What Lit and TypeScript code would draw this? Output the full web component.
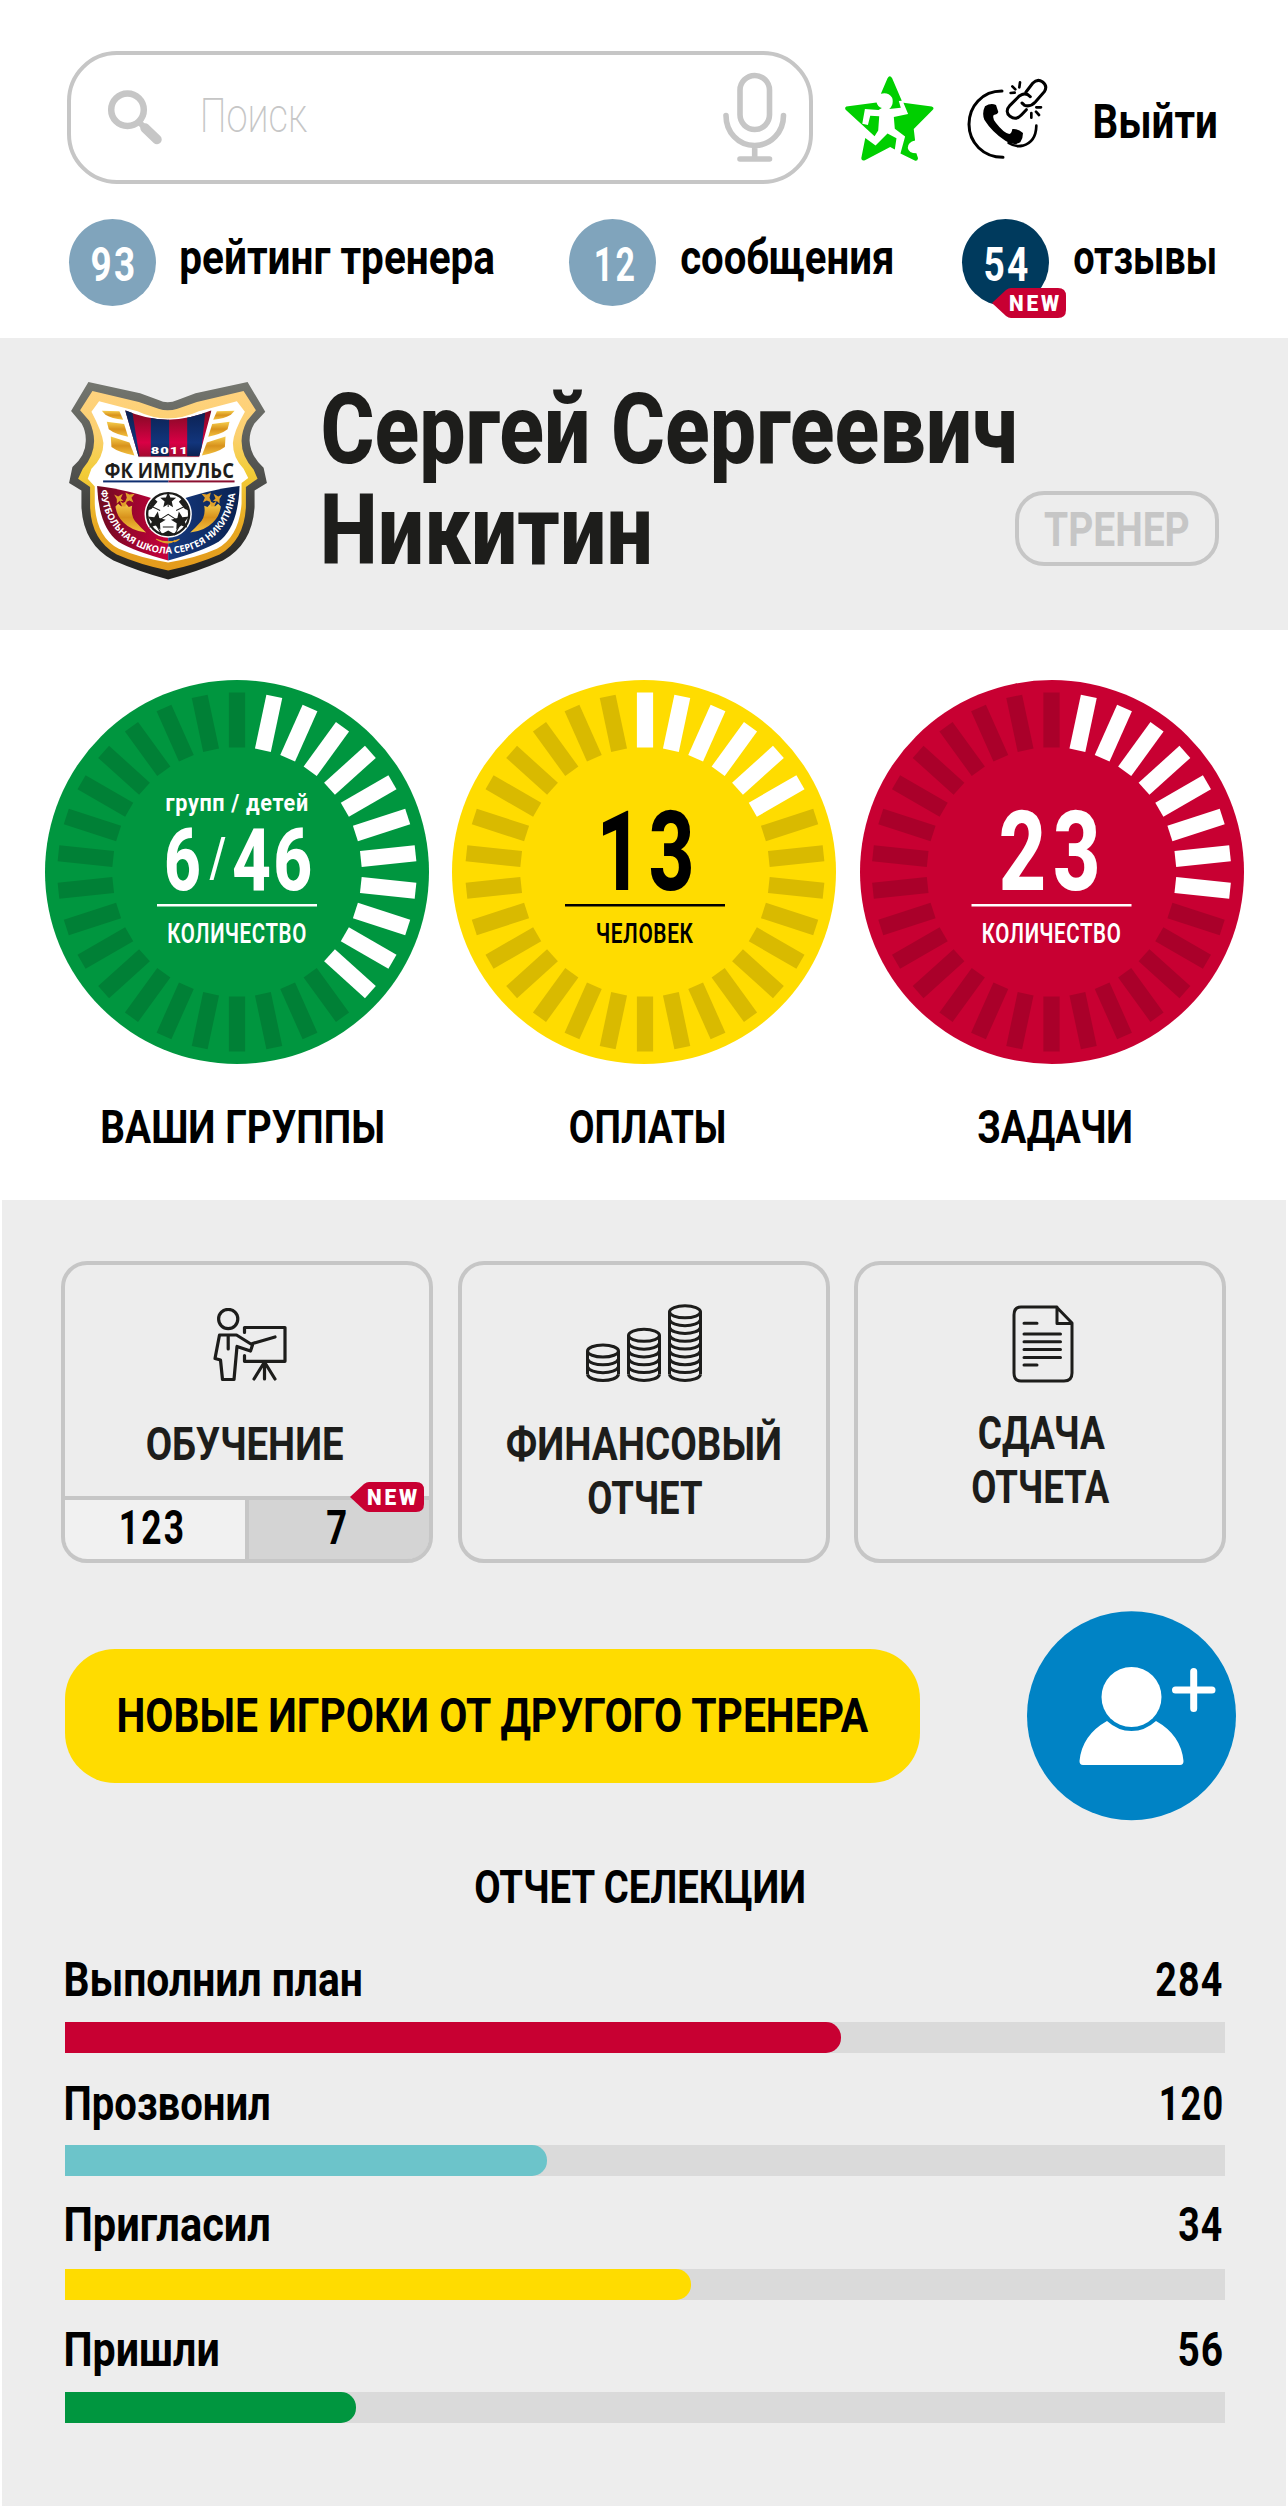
import { LitElement, html, svg, css } from "lit";
import { customElement, property } from "lit/decorators.js";

const INK = "#1d1d1b";
const FAMILY = 'Roboto, "Liberation Sans", sans-serif';
const CAP = 0.711;

const ctx = document.createElement("canvas").getContext("2d")!;

interface FitOptions {
  weight?: number;
  fill?: string;
  spacing?: number;
  family?: string;
}

/** SVG text whose inked glyphs span exactly `w` from `x`, with capitals `cap` tall. */
function fitText(text: string, x: number, baseline: number, w: number, cap: number, o: FitOptions = {}) {
  const size = cap / CAP;
  const weight = o.weight ?? 700;
  const family = o.family ?? FAMILY;
  const spacing = o.spacing ?? 0;
  ctx.font = `${weight} ${size}px ${family}`;
  (ctx as any).letterSpacing = `${spacing}px`;
  const m = ctx.measureText(text);
  const left = -m.actualBoundingBoxLeft;
  const scale = w / (m.actualBoundingBoxRight - left);
  return svg`<text
    transform="translate(${x - left * scale} ${baseline}) scale(${scale} 1)"
    font-family=${family} font-size=${size} font-weight=${weight}
    letter-spacing=${spacing} fill=${o.fill ?? "#000"}>${text}</text>`;
}

/** A line of text as a block exactly as wide as its ink and as tall as its capitals. */
function line(text: string, w: number, cap: number, o: FitOptions & { dx?: number; dy?: number } = {}) {
  return html`<svg class="line" width=${w} height=${cap}>
    ${fitText(text, o.dx ?? 0, cap + (o.dy ?? 0), w, cap, o)}
  </svg>`;
}

const lineStyles = css`
  .line { display: block; flex: none; overflow: visible; }
  svg { display: block; flex: none; }
`;

@customElement("new-tag")
class NewTag extends LitElement {
  static styles = css`
    :host { display: block; }
    svg { display: block; }
  `;
  render() {
    return html`<svg width="74" height="30" viewBox="0 0 74 30">
      <path d="M0 15 L14 2 Q16.500 0 19 0 H66 Q74 0 74 8 V22 Q74 30 66 30 H19 Q16.500 30 14 28 Z" fill="#c80032" />
      ${fitText("NEW", 18, 23, 49.5, 16, { weight: 900, fill: "#fff", spacing: 3 })}
    </svg>`;
  }
}

@customElement("club-crest")
class ClubCrest extends LitElement {
  static styles = css`
    :host { display: block; }
    svg { display: block; }
    .ring { font: 700 28px "Open Sans", "Noto Sans", sans-serif; }
  `;
  render() {
    const star = (cx: number, cy: number, r: number, turn = 0) => {
      const pts = Array.from({ length: 10 }, (_, i) => {
        const a = ((i * 36 - 90 + turn) * Math.PI) / 180;
        const k = i % 2 ? r * 0.45 : r;
        return `${(cx + k * Math.cos(a)).toFixed(1)},${(cy + k * Math.sin(a)).toFixed(1)}`;
      }).join(" ");
      return svg`<polygon points=${pts} fill=${INK} />`;
    };
    const wing = svg`
      <path d="M155 151 L208 153 L219 178 Q185 175 166 163 Z" fill="url(#gold2)" />
      <path d="M170 184 L222 191 L234 229 Q195 222 176 207 Z" fill="url(#gold2)" />
      <path d="M182 228 L238 246 L253 285 Q205 276 184 260 Z" fill="url(#gold2)" />
      <path d="M196 438 L204 430 L214 438 L224 426 L236 440 L246 436 Q240 470 262 490 Q274 504 288 516 Q246 512 220 486 Q200 468 196 438 Z" fill="url(#gold2)" />
      <path d="M192 402 l12 6 14 -8 -6 14 8 8 -12 0 -8 8 0 -14 Z M226 396 l12 6 16 -2 -10 12 6 14 -12 -6 -14 6 6 -14 Z M208 420 l10 8 12 -6 -4 16 -10 0 Z" fill="#e0a02a" />`;
    return html`<svg width="198" height="197.500" viewBox="57 65 593 592">
      <defs>
        <linearGradient id="steel" x1="0" y1="0" x2="0" y2="1">
          <stop offset="0" stop-color="#757770" /><stop offset=".5" stop-color="#4d4e4b" /><stop offset="1" stop-color="#20201e" />
        </linearGradient>
        <linearGradient id="gold" x1="0" y1="0" x2="0" y2="1">
          <stop offset="0" stop-color="#ffd27e" /><stop offset=".25" stop-color="#fbd06f" /><stop offset=".45" stop-color="#f2cd38" /><stop offset=".75" stop-color="#e8a922" /><stop offset="1" stop-color="#e39a1c" />
        </linearGradient>
        <linearGradient id="gold2" x1="0" y1="0" x2="0" y2="1">
          <stop offset="0" stop-color="#f6cf4e" /><stop offset=".5" stop-color="#d8921c" /><stop offset="1" stop-color="#f3c13f" />
        </linearGradient>
        <linearGradient id="crimson" x1="0" y1="150" x2="0" y2="288" gradientUnits="userSpaceOnUse">
          <stop offset="0" stop-color="#7d0a22" /><stop offset=".7" stop-color="#d90045" /><stop offset="1" stop-color="#a30a30" />
        </linearGradient>
        <linearGradient id="navy" x1="0" y1="150" x2="0" y2="288" gradientUnits="userSpaceOnUse">
          <stop offset="0" stop-color="#0b2151" /><stop offset=".7" stop-color="#12357c" /><stop offset="1" stop-color="#0b2151" />
        </linearGradient>
        <linearGradient id="halfred" x1="0" y1="0" x2="1" y2="0">
          <stop offset="0" stop-color="#6d0a20" /><stop offset="1" stop-color="#c8003c" />
        </linearGradient>
        <linearGradient id="halfblue" x1="0" y1="0" x2="1" y2="0">
          <stop offset="0" stop-color="#15397f" /><stop offset="1" stop-color="#0a2251" />
        </linearGradient>
        <clipPath id="banner"><path d="M225 150 Q352 206 484 150 L447 288 H265 Z" /></clipPath>
        <path id="ringpath" d="M153 388 A201 191 0 0 0 555 388" />
      </defs>
      <path fill="url(#steel)" d="M115 65 L270 99 L325 119 Q352 132 382 119 L436 99 L592 65 L645 154 L612 190 Q598 214 598 240 Q600 286 640 322 L650 368 L613 390 V440 Q606 552 518 600 Q440 634 354 657 Q268 634 190 600 Q100 552 94 440 V390 L57 368 L67 320 Q108 286 107 240 Q108 214 95 190 L63 152 Z" />
      <path fill="url(#gold)" d="M127 92 L266 125 L325 145 Q352 154 382 145 L440 125 L580 92 L617 150 L590 182 Q574 214 574 242 Q574 288 610 327 L622 355 L587 380 V440 Q582 540 508 582 Q440 612 354 630 Q268 612 200 582 Q124 540 120 440 V380 L84 355 L98 325 Q132 286 132 242 Q132 214 118 182 L90 150 Z" />
      <path fill="#fff" d="M147 123 L262 153 Q352 196 446 153 L560 123 L584 154 Q550 214 548 248 Q548 292 580 325 L594 353 L574 368 V430 Q566 530 500 565 Q440 592 354 606 Q268 592 206 565 Q138 530 134 430 V378 L113 355 L124 325 Q160 292 160 248 Q156 214 124 154 Z" />
      <g clip-path="url(#banner)">
        <rect x="220" y="145" width="270" height="145" fill="url(#crimson)" />
        <path d="M220 145 H245 L268 290 H220 Z" fill="url(#navy)" />
        <rect x="302" y="145" width="55" height="145" fill="url(#navy)" />
        <path d="M411 145 H466 L452 290 H411 Z" fill="url(#navy)" />
      </g>
      <path d="M141 377 Q230 386 354 430 V600 Q250 572 205 544 Q146 500 141 377 Z" fill="url(#halfred)" />
      <path d="M568 377 Q480 386 354 430 V600 Q458 572 505 544 Q564 500 568 377 Z" fill="url(#halfblue)" />
      ${wing}
      <g transform="translate(708 0) scale(-1 1)">${wing}</g>
      <path d="M318 536 Q354 552 388 536 Q370 548 372 541 Q354 556 318 536 Z" fill="#e0a02a" stroke="#e0a02a" stroke-width="3" />
      <rect x="265" y="288" width="182" height="2" fill="#8b1030" />
      ${fitText("8011", 303, 280, 103, 20, { weight: 900, fill: "#fff", spacing: 2 })}
      ${fitText("ФК ИМПУЛЬС", 165, 352, 385, 45, { weight: 700, fill: INK, family: '"Open Sans", "Noto Sans", sans-serif' })}
      <rect x="159" y="360" width="196" height="6" fill="#0f2f70" />
      <rect x="355" y="360" width="198" height="6" fill="#8b1030" />
      <circle cx="354" cy="461" r="71" fill="#fff" />
      <circle cx="354" cy="461" r="63" fill="#fff" stroke=${INK} stroke-width="7" />
      <path d="M354 440 V404 M330 450 L300 436 M378 450 L408 436 M326 480 L354 462 L382 480 M322 500 L336 524 M386 500 L372 524 M338 500 H370" stroke=${INK} stroke-width="3" fill="none" />
      ${star(354, 420, 25)}${star(318, 482, 29, 10)}${star(391, 482, 29, -10)}
      <path d="M292 450 L310 412 L322 424 L304 446 Z M416 450 L398 412 L386 424 L404 446 Z M336 520 L354 510 L372 520 L354 526 Z" fill=${INK} />
      <text class="ring" fill="#fff"><textPath href="#ringpath" textLength="604" lengthAdjust="spacingAndGlyphs">ФУТБОЛЬНАЯ ШКОЛА СЕРГЕЯ НИКИТИНА</textPath></text>
    </svg>`;
  }
}

interface GaugeData {
  title: string;
  titleWidth: number;
  dx: number;
  color: string;
  dim: string;
  ink: string;
  from: number;
  to: number;
  kind: "pair" | "single";
  value: string;
  valueX: number;
  valueWidth: number;
  unit: string;
  unitX: number;
  unitWidth: number;
  center: number;
}

@customElement("ring-gauge")
class RingGauge extends LitElement {
  static styles = [lineStyles, css`
    :host { display: flex; flex-direction: column; align-items: center; gap: 46px; width: 384px; }
  `];
  @property({ attribute: false }) data!: GaugeData;
  render() {
    const d = this.data;
    const c = d.center;
    const ticks = Array.from({ length: 30 }, (_, i) => svg`<rect x=${c - 8.1} y="12.500" width="16.200" height="55"
      transform="rotate(${i * 12} ${c} 192)" fill=${i >= d.from && i <= d.to ? "#fff" : d.dim} />`);
    return html`
      <svg width="384" height="384" viewBox="0 0 384 384">
        <circle cx="192" cy="192" r="192" fill=${d.color} />
        ${ticks}
        ${d.kind === "pair"
          ? svg`
            ${fitText("групп / детей", 121.3, 131, 141, 17.6, { fill: d.ink, spacing: 0.8 })}
            ${fitText("6", 121.3, 210, 33, 62, { fill: d.ink, weight: 800 })}
            ${fitText("/", 164.5, 197, 16, 40, { fill: d.ink, weight: 500 })}
            ${fitText("46", 188.5, 210, 77, 62, { fill: d.ink, weight: 800, spacing: 3 })}`
          : fitText(d.value, d.valueX, 210, d.valueWidth, 78.5, { fill: d.ink, weight: 800, spacing: 9 })}
        <rect x=${c - 80} y="224" width="160" height="2.500" fill=${d.ink} />
        ${fitText(d.unit, d.unitX, 263, d.unitWidth, 19, { fill: d.ink, weight: 600, spacing: 0.8 })}
      </svg>
      ${line(d.title, d.titleWidth, 33, { dx: d.dx })}`;
  }
}

@customElement("progress-row")
class ProgressRow extends LitElement {
  static styles = [lineStyles, css`
    :host { display: block; height: 123.500px; }
    .head { display: flex; justify-content: space-between; padding: 0 3px 0 1px; }
    .track { height: 31px; margin-top: 26px; background: #dadada; }
    .fill { height: 100%; border-radius: 0 15px 15px 0; }
    .red { background: #c80032; }
    .teal { background: #6cc4ca; }
    .yellow { background: #ffdc00; }
    .green { background: #00963f; }
  `];
  @property() name = "";
  @property() value = "";
  @property() tone = "red";
  @property({ type: Number }) nameWidth = 0;
  @property({ type: Number }) valueWidth = 0;
  @property({ type: Number }) share = 0;
  @property({ type: Number }) dy = 0;
  render() {
    return html`
      <div class="head">
        ${line(this.name, this.nameWidth, 34, { dy: this.dy })}
        ${line(this.value, this.valueWidth, 34, { dy: this.dy, spacing: 1.5 })}
      </div>
      <div class="track"><div class="fill ${this.tone}" style="width:${this.share}%"></div></div>`;
  }
}

const gauges: GaugeData[] = [
  { title: "ВАШИ ГРУППЫ", titleWidth: 281, dx: 6, color: "#00963f", dim: "#008036", ink: "#fff", from: 1, to: 11, kind: "pair", value: "", valueX: 0, valueWidth: 0, unit: "КОЛИЧЕСТВО", unitX: 123, unitWidth: 138, center: 192 },
  { title: "ОПЛАТЫ", titleWidth: 155, dx: 2.5, color: "#ffdc00", dim: "#d9ba00", ink: "#000", from: 0, to: 5, kind: "single", value: "13", valueX: 151, valueWidth: 88, unit: "ЧЕЛОВЕК", unitX: 144.5, unitWidth: 97, center: 193 },
  { title: "ЗАДАЧИ", titleWidth: 153, dx: 3, color: "#c80032", dim: "#aa002a", ink: "#fff", from: 1, to: 8, kind: "single", value: "23", valueX: 141, valueWidth: 96, unit: "КОЛИЧЕСТВО", unitX: 122.5, unitWidth: 138, center: 191.5 },
];

const rows = [
  { name: "Выполнил план", nameWidth: 295, value: "284", valueWidth: 66, share: 66.9, tone: "red", dy: -0.5 },
  { name: "Прозвонил", nameWidth: 203, value: "120", valueWidth: 61, share: 41.55, tone: "teal", dy: 0.5 },
  { name: "Пригласил", nameWidth: 203, value: "34", valueWidth: 43, share: 53.95, tone: "yellow", dy: -2 },
  { name: "Пришли", nameWidth: 152, value: "56", valueWidth: 43, share: 25.1, tone: "green", dy: -0.5 },
];

@customElement("app-root")
class AppRoot extends LitElement {
  static styles = [lineStyles, css`
    :host { display: block; width: 1288px; height: 2506px; background: #fff; overflow: hidden; }
    .top { display: flex; height: 184px; padding: 51px 0 0 67px; box-sizing: border-box; }
    .search { display: flex; align-items: flex-start; box-sizing: border-box; width: 746px; height: 133px;
      border: 4px solid #c6c6c6; border-radius: 50px; padding: 0 22px 0 36px; }
    .lens { margin: 35px 40px 0 0; }
    .query { margin-top: 43px; }
    .mic { margin: 17px 0 0 auto; }
    .star { margin: 25px 0 0 32px; }
    .call { margin: 26px 0 0 33px; }
    .exit { margin: 53px 0 0 46.500px; }
    .stats { display: flex; padding: 35px 0 32px 68.500px; height: 87px; }
    .stat { display: flex; gap: 25px; }
    .stat + .stat { margin-left: 75px; }
    .stat + .stat + .stat { margin-left: 70px; }
    .dot { position: relative; display: flex; justify-content: center; box-sizing: border-box; width: 87px; height: 87px;
      padding-top: 28px; border-radius: 50%; background: #80a4bc; }
    .dark { background: #003a5d; }
    .dot-tag { position: absolute; left: 30px; top: 69px; }
    .caption { margin-top: 21px; }
    .profile { display: flex; box-sizing: border-box; height: 292px; padding: 44px 69.500px 0 69px; background: #ededed; }
    .name { display: flex; flex-direction: column; gap: 31px; margin: 11px 0 0 56px; }
    .role { display: flex; justify-content: center; align-items: center; box-sizing: border-box; width: 204px; height: 75px;
      margin: 109px 0 0 auto; border: 4px solid #c6c6c6; border-radius: 29px; }
    .gauges { display: flex; gap: 23.500px; box-sizing: border-box; height: 570px; padding: 49.700px 0 0 44.700px; }
    .board { box-sizing: border-box; height: 1306px; margin: 0 2px; padding: 61px 59px 0; background: #ededed; }
    .cards { display: grid; grid-template-columns: repeat(3, 372px); gap: 24.700px; }
    .card { position: relative; display: flex; flex-direction: column; align-items: center; box-sizing: border-box; height: 302px;
      border: 4px solid #c6c6c6; border-radius: 26px; }
    .teach { margin: 43px 0 45px 6px; }
    .coins { margin: 38px 0 45px; }
    .doc { margin: 40px 0 33px 5px; }
    .second { margin-top: 21px; }
    .counts { display: grid; grid-template-columns: 180px 180px; gap: 4px; align-self: stretch; margin-top: 36px; height: 59px;
      border-top: 4px solid #c6c6c6; background: #c6c6c6; border-radius: 0 0 22px 22px; overflow: hidden; }
    .cell { display: flex; justify-content: center; padding-top: 10px; }
    .seen { background: #f1f1f1; padding-right: 6px; }
    .fresh { background: #d4d4d4; padding-right: 5px; }
    .card-tag { position: absolute; right: 5px; bottom: 47px; }
    .actions { display: flex; align-items: center; justify-content: space-between; margin-top: 48px; }
    .transfer { display: flex; align-items: center; justify-content: center; width: 854.500px; height: 134px; margin-left: 4px;
      border-radius: 50px; background: #ffdc00; }
    .add { margin-right: -9px; }
    .heading { display: flex; justify-content: center; margin: 49.500px 9px 58.500px 0; }
    .report { padding: 0 0 0 4px; width: 1160px; }
  `];

  private coinStack(cx: number, top: number, n: number) {
    const step = 7.83;
    const end = top + n * step;
    return svg`<ellipse cx=${cx} cy=${top} rx="15.500" ry="6" />
      <path d="M${cx - 15.5} ${top} V${end} M${cx + 15.5} ${top} V${end}" />
      ${Array.from({ length: n }, (_, i) => {
        const y = top + (i + 1) * step;
        return svg`<path d="M${cx - 15.5} ${y} C${cx - 13} ${y + 8} ${cx + 13} ${y + 8} ${cx + 15.5} ${y}" />`;
      })}`;
  }

  render() {
    return html`
      <header class="top">
        <div class="search">
          <svg class="lens" width="56" height="56" viewBox="0 0 56 56" fill="none" stroke="#c6c6c6">
            <circle cx="20.500" cy="19.700" r="16.300" stroke-width="6.500" />
            <path d="M33 33 L37 37" stroke-width="6" />
            <path d="M38 38 L50 49.500" stroke-width="9.500" stroke-linecap="round" />
          </svg>
          <div class="query">${line("Поиск", 104, 34, { weight: 200, fill: "#c6c6c6" })}</div>
          <svg class="mic" width="64" height="92" viewBox="0 0 64 92" fill="none" stroke="#c6c6c6" stroke-width="5.600" stroke-linecap="round">
            <rect x="17" y="3.500" width="29.500" height="54" rx="14.750" />
            <path d="M3 43.500 C3 60 15 73.500 31.700 73.500 C48 73.500 60.500 60 60.500 43.500 M31.700 73.500 V86 M17 87 H46.500" />
          </svg>
        </div>
        <svg class="star" width="89" height="85" viewBox="30 23 268 255" fill="#00cf00">
          <path d="M138 76 L158 29 Q165 18 172 29 L201 97 L192 98 L198 118 L163 122 Q178 108 172 88 Q160 70 138 76 Z" />
          <path d="M206 103 L291 114 Q301 118 293 126 L237 182 L241 217 Q219 222 219 239 Q222 255 245 255 L250 270 Q248 280 240 277 L197 256 L211 205 L180 181 L177 146 L220 137 Z" />
          <path d="M34 114 L125 102 Q128 114 141 119 L131 125 L90 122 L82 166 L99 170 L106 142 L133 144 L130 187 L119 204 L32 124 Q28 118 34 114 Z" />
          <path d="M91 209 L122 232 L158 196 L185 210 L180 244 L166 236 L90 276 Q80 279 79 270 Z" />
        </svg>
        <svg class="call" width="81" height="83" viewBox="395 27 243 249" fill="none" stroke="#000" stroke-width="9" stroke-linecap="round">
          <path d="M500 69 C440 69 401 115 401 169 C401 224 444 268 503 268" />
          <path d="M603 173 Q602 222 562 233 Q540 238 520 225" stroke-width="8" />
          <path stroke="none" fill="#000" d="M449 115 Q466 104 482 111 L489 132 Q487 139 475 141 Q470 150 482 165 Q505 195 522 198 Q529 197 531 183 Q547 181 563 195 Q563 212 555 223 Q534 235 510 218 Q470 192 447 155 Q439 135 449 115 Z" />
          <path d="M572 72 L592 46 Q606 31 621 41 Q638 53 627 71 L600 102 Q585 118 568 112 L560 105" />
          <path d="M585 86 Q570 70 552 84 L524 112 Q507 131 524 145 Q542 158 558 141 L573 125" />
          <path d="M554 43 L552 58 M531 55 L540 64 M526 75 L538 74 M588 135 L588 149 M602 131 L611 141 M603 118 L617 118" stroke-width="8" />
        </svg>
        <div class="exit">${line("Выйти", 121, 34)}</div>
      </header>

      <nav class="stats">
        <div class="stat">
          <div class="dot">${line("93", 42, 34, { fill: "#fff", spacing: 3, dx: 1 })}</div>
          <div class="caption">${line("рейтинг тренера", 313.5, 34)}</div>
        </div>
        <div class="stat">
          <div class="dot">${line("12", 38, 34, { fill: "#fff", spacing: 3, dx: 2 })}</div>
          <div class="caption">${line("сообщения", 211, 34)}</div>
        </div>
        <div class="stat">
          <div class="dot dark">
            ${line("54", 43, 34, { fill: "#fff", spacing: 3, dx: 1 })}
            <new-tag class="dot-tag"></new-tag>
          </div>
          <div class="caption">${line("отзывы", 141, 34)}</div>
        </div>
      </nav>

      <section class="profile">
        <club-crest></club-crest>
        <div class="name">
          ${line("Сергей Сергеевич", 691, 70, { fill: INK, weight: 800 })}
          ${line("Никитин", 325, 70, { fill: INK, weight: 800, dx: 1 })}
        </div>
        <div class="role">${line("ТРЕНЕР", 145, 34, { fill: "#c6c6c6" })}</div>
      </section>

      <section class="gauges">
        ${gauges.map((g) => html`<ring-gauge .data=${g}></ring-gauge>`)}
      </section>

      <section class="board">
        <div class="cards">
          <div class="card">
            <svg class="teach" width="75" height="74" viewBox="0 0 75 74" fill="none" stroke=${INK} stroke-width="3.200" stroke-linecap="round" stroke-linejoin="round">
              <ellipse cx="15.200" cy="11" rx="9.600" ry="9.600" />
              <path d="M6.500 27 H23.500 L39.500 37 L37.500 43 L24 38.500 L21 71.500 H9.500 L7.500 52 L2 50.500 Z M15.200 28 V41" />
              <path d="M31.500 24.500 V19.500 H72 V53.300 H31.500 V47.500 M39.500 35.500 L62 29 M51.500 54 V71 M51.500 54 L41 71 M51.500 54 L62 71" />
            </svg>
            ${line("ОБУЧЕНИЕ", 197, 33, { fill: INK, dx: -2.5 })}
            <div class="counts">
              <div class="cell seen">${line("123", 62, 34, { spacing: 3 })}</div>
              <div class="cell fresh">${line("7", 19, 34)}</div>
            </div>
            <new-tag class="card-tag"></new-tag>
          </div>
          <div class="card">
            <svg class="coins" width="118" height="79" viewBox="0 0 118 79" fill="none" stroke=${INK} stroke-width="3">
              ${this.coinStack(18, 48, 3)}${this.coinStack(59, 32.3, 5)}${this.coinStack(100, 8.8, 8)}
            </svg>
            ${line("ФИНАНСОВЫЙ", 273.5, 33, { fill: INK, dx: -0.5 })}
            <div class="second">${line("ОТЧЕТ", 114, 33, { fill: INK, dx: 1 })}</div>
          </div>
          <div class="card">
            <svg class="doc" width="62" height="78" viewBox="0 0 62 78" fill="none" stroke=${INK} stroke-width="3" stroke-linejoin="round" stroke-linecap="round">
              <path d="M9 2 H44.500 L60 18 V68 Q60 76 52 76 H9 Q2 76 2 68 V10 Q2 2 9 2 Z M45 2 V18.500 H60" />
              <path d="M12 18.300 H25 M12 29 H48.500 M12 36.700 H48.500 M12 44.500 H48.500 M12 52.500 H48.500 M12 60 H25" />
            </svg>
            ${line("СДАЧА", 127, 33, { fill: INK, dx: 1.5 })}
            <div class="second">${line("ОТЧЕТА", 138, 33, { fill: INK, dx: 1 })}</div>
          </div>
        </div>

        <div class="actions">
          <div class="transfer">${line("НОВЫЕ ИГРОКИ ОТ ДРУГОГО ТРЕНЕРА", 751, 34, { dx: 2, dy: -1.5 })}</div>
          <svg class="add" width="209" height="209.500" viewBox="0 0 209 209.500">
            <circle cx="104.500" cy="104.750" r="104.500" fill="#0083c5" />
            <circle cx="104.500" cy="86" r="30" fill="#fff" />
            <path d="M80 110 Q91 120 104.500 120 Q118 120 129 110 Q154 124 156.500 150 Q156.500 154 153 154 H56 Q52.500 154 52.500 150 Q55 124 80 110 Z" fill="#fff" />
            <path d="M148.500 79 H185 M166.700 60.500 V97.500" stroke="#fff" stroke-width="7" stroke-linecap="round" />
          </svg>
        </div>

        <div class="heading">${line("ОТЧЕТ СЕЛЕКЦИИ", 330, 33)}</div>

        <div class="report">
          ${rows.map((r) => html`<progress-row .name=${r.name} .value=${r.value} .tone=${r.tone}
            .nameWidth=${r.nameWidth} .valueWidth=${r.valueWidth} .share=${r.share} .dy=${r.dy}></progress-row>`)}
        </div>
      </section>`;
  }
}
